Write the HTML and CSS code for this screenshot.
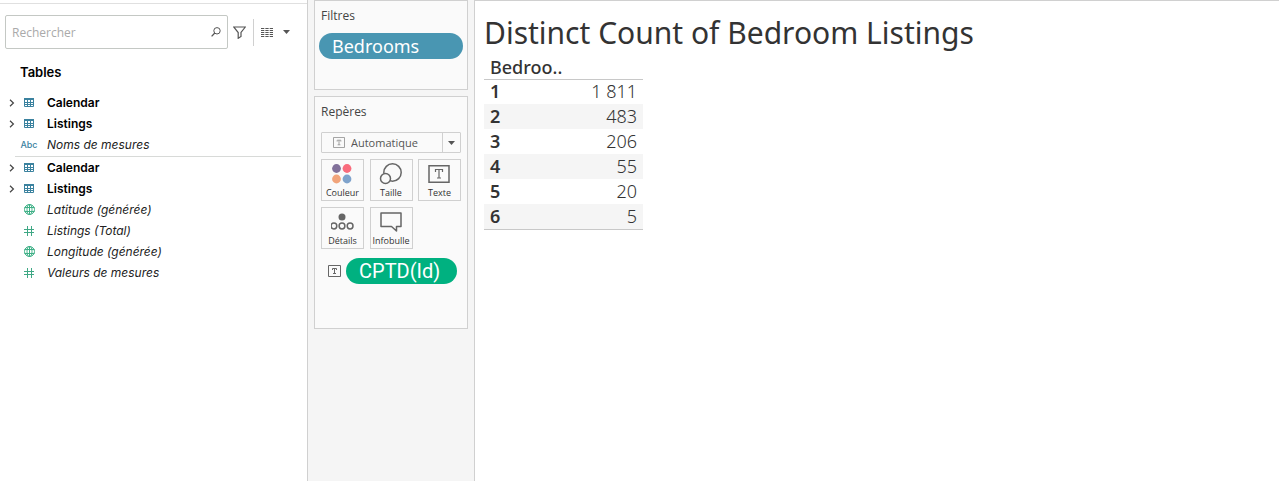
FILE: index.html
```html
<!DOCTYPE html>
<html lang="fr">
<head>
<meta charset="utf-8">
<meta name="viewport" content="width=device-width, initial-scale=1">
<title>Distinct Count of Bedroom Listings</title>
<link rel="stylesheet" href="styles.css">
</head>
<body>
<svg class="sprite" aria-hidden="true">
  <symbol id="chevron" viewBox="0 0 6 8"><path d="M1 .8 4.4 4 1 7.2" fill="none" stroke="#444" stroke-width="1.2"/></symbol>
  <symbol id="table" viewBox="0 0 10 9"><path d="M.5 .5h9v8h-9zM.5 4.5h9M.5 6.5h9M3.500 2v6.500M6.500 2v6.500" fill="none" stroke="#3b829f"/><path d="M0 0h10v2H0z" fill="#3b829f"/></symbol>
  <symbol id="globe" viewBox="0 0 11 11"><g fill="none" stroke="#3fb087"><circle cx="5.500" cy="5.500" r="5"/><ellipse cx="5.500" cy="5.500" rx="2.500" ry="5"/><path d="M.5 3.500h10M.5 7.500h10M5.500 0v11"/></g></symbol>
  <symbol id="hash" viewBox="0 0 10 10"><path d="M0 3.500h10M0 6.500h10M3.500 0v10M7.500 0v10" fill="none" stroke="#3fa885"/></symbol>
  <symbol id="caret" viewBox="0 0 7 4"><path d="M0 0h7L3.500 4z" fill="#555"/></symbol>
  <symbol id="text-box" viewBox="0 0 13 12"><path d="M.5 .5h12v11H.5zM4.500 5V3.500h4V5M6.500 3.500v5M5 8.500h3" fill="none" stroke="currentColor"/></symbol>
</svg>

<aside class="data-pane">
  <div class="toolbar">
    <label class="search">
      <input class="search-input" type="search" placeholder="Rechercher" aria-label="Rechercher">
      <svg class="search-icon" viewBox="0 0 10 10"><circle cx="6" cy="3.800" r="3.200" fill="none" stroke="#555"/><path d="M3.800 6 .6 9.400" stroke="#555" stroke-width="1.300"/></svg>
    </label>
    <button class="tool" aria-label="Filtrer"><svg width="13" height="13" viewBox="0 0 13 13"><path d="M.7 1h11.600L8 6.500v4L5.200 12.300V6.500z" fill="none" stroke="#555" stroke-width="1.200"/></svg></button>
    <button class="tool tool-view" aria-label="Affichage"><svg width="12" height="9" viewBox="0 0 12 9"><path d="M0 .5h12M0 2.500h12M0 4.500h12M0 6.500h12M0 8.500h12" stroke="#555" stroke-dasharray="3.300 1.050"/></svg><svg width="7" height="4"><use href="#caret"/></svg></button>
  </div>
  <h2 class="pane-title">Tables</h2>
  <ul class="fields">
    <li class="field table"><svg class="chevron"><use href="#chevron"/></svg><span class="kind"><svg width="10" height="9"><use href="#table"/></svg></span>Calendar</li>
    <li class="field table"><svg class="chevron"><use href="#chevron"/></svg><span class="kind"><svg width="10" height="9"><use href="#table"/></svg></span>Listings</li>
    <li class="field"><span class="chevron"></span><span class="kind abc">Abc</span><em>Noms de mesures</em></li>
  </ul>
  <ul class="fields measures">
    <li class="field table"><svg class="chevron"><use href="#chevron"/></svg><span class="kind"><svg width="10" height="9"><use href="#table"/></svg></span>Calendar</li>
    <li class="field table"><svg class="chevron"><use href="#chevron"/></svg><span class="kind"><svg width="10" height="9"><use href="#table"/></svg></span>Listings</li>
    <li class="field"><span class="chevron"></span><span class="kind"><svg width="11" height="11"><use href="#globe"/></svg></span><em>Latitude (générée)</em></li>
    <li class="field"><span class="chevron"></span><span class="kind"><svg width="10" height="10"><use href="#hash"/></svg></span><em>Listings (Total)</em></li>
    <li class="field"><span class="chevron"></span><span class="kind"><svg width="11" height="11"><use href="#globe"/></svg></span><em>Longitude (générée)</em></li>
    <li class="field"><span class="chevron"></span><span class="kind"><svg width="10" height="10"><use href="#hash"/></svg></span><em>Valeurs de mesures</em></li>
  </ul>
</aside>

<section class="shelves">
  <div class="card filters">
    <h3 class="card-title">Filtres</h3>
    <button class="pill dimension">Bedrooms</button>
  </div>
  <div class="card marks">
    <h3 class="card-title">Repères</h3>
    <div class="mark-type">
      <svg class="mark-type-icon" width="12" height="11"><use href="#text-box"/></svg>
      <select class="mark-select" aria-label="Type de repère"><option>Automatique</option></select>
      <span class="mark-arrow"><svg width="7" height="4"><use href="#caret"/></svg></span>
    </div>
    <div class="mark-buttons">
      <button class="mark"><svg viewBox="1 0 24 22"><circle cx="6.500" cy="5.500" r="4.400" fill="#81709a"/><circle cx="17" cy="5.500" r="4.400" fill="#f96c7d"/><circle cx="6.500" cy="16" r="4.400" fill="#f1a47b"/><circle cx="17" cy="16" r="4.400" fill="#7fa3cc"/></svg>Couleur</button>
      <button class="mark"><svg viewBox="0 0 24 22"><g fill="#fafafa" stroke="#666" stroke-width="1.500"><circle cx="13.500" cy="9.500" r="8.700"/><circle cx="6.500" cy="15.500" r="5"/></g></svg>Taille</button>
      <button class="mark"><svg viewBox="1 0 24 22"><path d="M2 2.700h20v16.600H2z" fill="none" stroke="#666" stroke-width="1.500"/><path d="M8.500 9V6.500h7V9M12 6.500v8.500M10 15h4" fill="none" stroke="#666" stroke-width="1.200"/></svg>Texte</button>
      <button class="mark"><svg viewBox="1 0 24 22"><circle cx="12" cy="6" r="3.500" fill="#666"/><g fill="none" stroke="#666" stroke-width="1.500"><circle cx="3.900" cy="15" r="2.900"/><circle cx="12" cy="15" r="2.900"/><circle cx="20.100" cy="15" r="2.900"/></g></svg>Détails</button>
      <button class="mark"><svg viewBox="0 0 24 22"><path d="M2 2h20v13.500h-4.500v4.500L12.500 15.500H2z" fill="none" stroke="#666" stroke-width="1.500" stroke-linejoin="round"/></svg>Infobulle</button>
    </div>
    <div class="encoding">
      <svg width="13" height="12"><use href="#text-box"/></svg>
      <button class="pill measure">CPTD(Id)</button>
    </div>
  </div>
</section>

<main class="view">
  <h1 class="view-title">Distinct Count of Bedroom Listings</h1>
  <table class="crosstab">
    <thead><tr><th scope="col" colspan="2">Bedroo..</th></tr></thead>
    <tbody>
      <tr><th scope="row">1</th><td>1 811</td></tr>
      <tr><th scope="row">2</th><td>483</td></tr>
      <tr><th scope="row">3</th><td>206</td></tr>
      <tr><th scope="row">4</th><td>55</td></tr>
      <tr><th scope="row">5</th><td>20</td></tr>
      <tr><th scope="row">6</th><td>5</td></tr>
    </tbody>
  </table>
</main>
</body>
</html>
```
FILE: styles.css
```css
* { box-sizing: border-box; }
body {
  display: flex;
  min-height: 100vh;
  margin: 0;
  background: #fff;
  color: #000;
  font: 13px/21px Inter, Roboto, sans-serif;
}
h1, h2, h3, ul { margin: 0; padding: 0; }
button, input, select { font: inherit; }
button { border: 0; padding: 0; }
svg { display: block; flex: none; }
.sprite { position: absolute; width: 0; height: 0; }

.data-pane {
  flex: none;
  width: 308px;
  padding-top: 3px;
  border-right: 1px solid #d0d0d0;
}
.toolbar {
  display: flex;
  align-items: center;
  padding: 11px 5px 13px;
  border-top: 1px solid #e0e0e0;
}
.search {
  display: flex;
  align-items: center;
  width: 223px;
  height: 34px;
  padding: 0 6px;
  border: 1px solid #c4c8c4;
  border-radius: 2px;
}
.search-input {
  flex: 1;
  min-width: 0;
  padding: 0;
  border: 0;
  outline: 0;
  background: none;
  font: 12px/21px "Open Sans", sans-serif;
}
.search-input::placeholder { color: #aaa; }
.search-icon { width: 10px; height: 10px; }
.tool {
  display: flex;
  align-items: center;
  justify-content: center;
  width: 25px;
  height: 27px;
  padding-right: 2px;
  background: none;
}
.tool-view {
  gap: 10px;
  width: 45px;
  border-left: 1px solid #d0d0d0;
}
.pane-title {
  padding-left: 20px;
  font: 600 13px/21px Inter, sans-serif;
}
.fields {
  padding-top: 9px;
  list-style: none;
}
.measures {
  margin: 1px 6px 0 15px;
  padding-top: 0;
  border-top: 1px solid #d8dad8;
}
.measures .field { margin-left: -15px; }
.field {
  display: flex;
  align-items: center;
  height: 21px;
  padding-left: 9px;
}
.field em {
  color: #222;
  font: italic 400 12px/21px Inter, sans-serif;
}
.table { font-size: 12px; font-weight: 600; }
.chevron { width: 6px; height: 8px; }
.kind {
  display: flex;
  justify-content: center;
  width: 28px;
  margin-right: 4px;
}
.abc {
  color: #3b829f;
  font-size: 9px;
  font-weight: 500;
}

.shelves {
  display: flex;
  flex: none;
  flex-direction: column;
  gap: 6px;
  width: 167px;
  padding: 0 6px;
  border-right: 1px solid #d0d0d0;
  background: #f5f5f5;
}
.card {
  padding: 4px 6px;
  border: 1px solid #d0d0d0;
  background: #fafafa;
}
.filters { min-height: 90px; padding-right: 4px; padding-left: 4px; }
.filters .card-title { padding-left: 2px; }
.marks { min-height: 233px; }
.card-title {
  color: #444;
  font: 12px/21px "Open Sans", sans-serif;
}
.pill {
  display: block;
  height: 26px;
  padding: 0 13px;
  border-radius: 13px;
  color: #fff;
  text-align: left;
}
.dimension {
  width: 100%;
  margin-top: 7px;
  background: #4996b2;
  font: 18px/26px "Noto Sans", sans-serif;
}
.measure {
  width: 111px;
  background: #00b180;
  font: 20px/26px Roboto, sans-serif;
}
.mark-type {
  display: grid;
  grid-template-columns: 30px 1fr 18px;
  align-items: center;
  height: 21px;
  margin-top: 10px;
  border: 1px solid #d0d0d0;
  border-radius: 1px;
}
.mark-type > * { grid-row: 1; }
.mark-type-icon { grid-column: 1; margin-left: 11px; color: #999; }
.mark-select {
  grid-column: 1 / -1;
  width: 100%;
  height: 19px;
  padding: 0 0 0 29px;
  border: 0;
  appearance: none;
  background: none;
  color: #555;
  font: 11px/19px "Open Sans", sans-serif;
}
.mark-arrow {
  display: grid;
  grid-column: 3;
  place-items: center;
  height: 19px;
  border-left: 1px solid #d0d0d0;
  pointer-events: none;
}
.mark-buttons {
  display: grid;
  grid-template-columns: repeat(3, 43px);
  justify-content: space-between;
  row-gap: 6px;
  margin-top: 6px;
}
.mark {
  display: flex;
  flex-direction: column;
  align-items: center;
  height: 42px;
  padding-top: 3px;
  border: 1px solid #d0d0d0;
  background: #fafafa;
  color: #333;
  font: 9px/16px "Open Sans", sans-serif;
}
.mark svg { width: 24px; height: 22px; }
.encoding {
  display: flex;
  align-items: center;
  gap: 5px;
  margin: 9px 0 0 7px;
  color: #666;
}

.view {
  flex: 1;
  padding: 12px 9px;
  border-top: 1px solid #d0d0d0;
  color: #333;
  font-family: "Noto Sans", sans-serif;
}
.view-title { font-size: 30px; font-weight: 450; line-height: 40px; }
.crosstab {
  width: 159px;
  border-bottom: 1px solid #c8c8c8;
  border-spacing: 0;
  font-size: 18px;
  line-height: 23px;
}
.crosstab th, .crosstab td { height: 25px; padding: 0 6px 1px; }
.crosstab tr:first-child th, .crosstab tr:first-child td { height: 24px; }
.crosstab th { text-align: left; font-weight: 600; }
.crosstab thead tr:first-child th {
  height: 27px;
  padding: 3px 6px 0;
  border-bottom: 1px solid #c8c8c8;
  font-weight: 500;
}
.crosstab td { text-align: right; font-weight: 300; }
.crosstab tbody tr:nth-child(even) { background: #f5f5f5; }
```
